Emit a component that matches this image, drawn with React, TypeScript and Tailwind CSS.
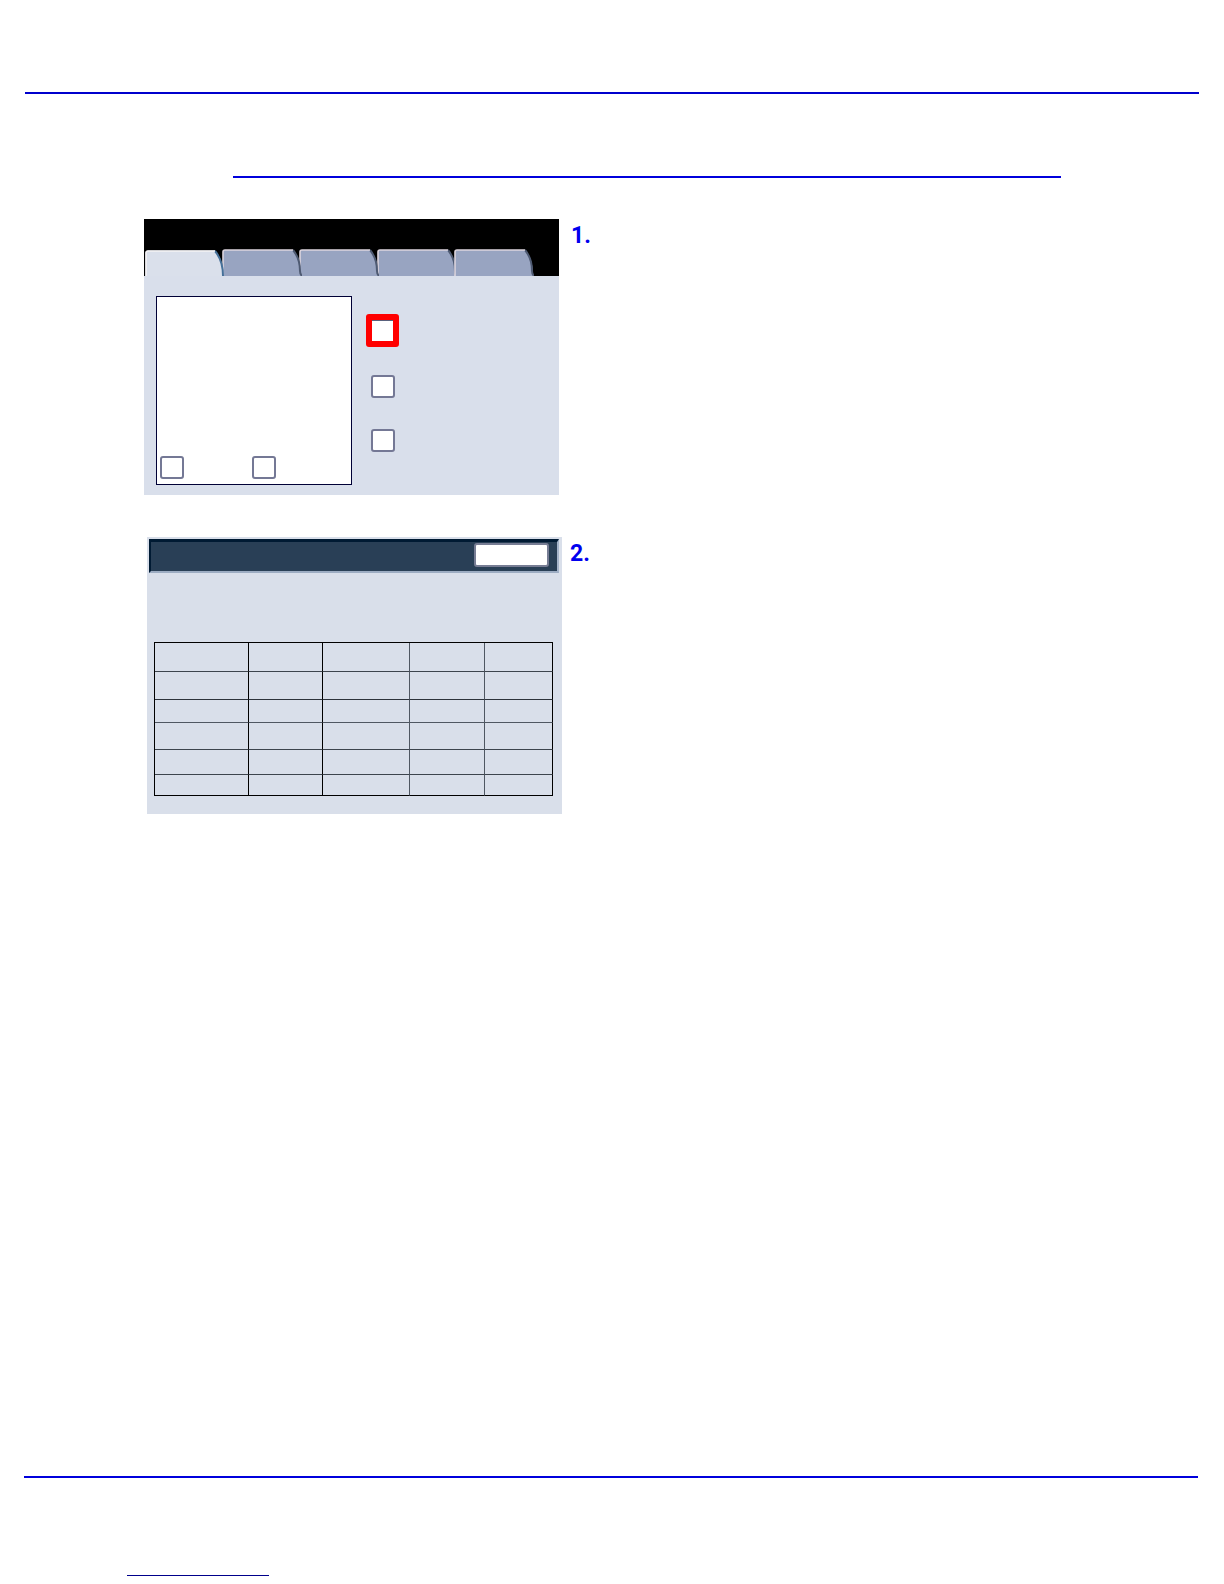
import clsx from "clsx";

const tabs = [
  { id: "Tab 1", active: true, layer: "z-40" },
  { id: "Tab 2", active: false, layer: "z-30" },
  { id: "Tab 3", active: false, layer: "z-20" },
  { id: "Tab 4", active: false, layer: "z-10" },
  { id: "Tab 5", active: false, layer: "z-20" },
];

const rows = [
  { height: "h-[29px]", line: "border-b-[#3d444d]" },
  { height: "h-[28px]", line: "border-b-[#2d333b]" },
  { height: "h-[23px]", line: "border-b-[#4f5762]" },
  { height: "h-[27px]", line: "border-b-[#3d444d]" },
  { height: "h-[25px]", line: "border-b-[#3d444d]" },
  { height: "h-[21px]", line: "border-b-black" },
];

const columns = ["border-r-black", "border-r-black", "border-r-[#4f5762]", "border-r-[#4f5762]", "border-r-black"];

interface TabProps {
  id: string;
  active: boolean;
  layer: string;
}

const Tab = ({ id, active, layer }: TabProps) => {
  return (
    <button type="button" aria-label={id} className={clsx("relative w-20", layer)}>
      <svg viewBox="0 0 80 27" className="block h-[27px] w-full" fill="none">
        <path
          d={active ? "M1.5 27V3.5Q1.5 1.5 4 1.5H71C76 7 79 15 79 27Z" : "M1 27V3Q1 1 3 1H71C76 6 79 14 79 27Z"}
          fill={active ? "#dae0eb" : "#98a4c1"}
        />
        <path
          d={active ? "M71 2C76 8 79 16 79 27" : "M71 1C76 7 78 14 78 22Q78 25 80 27"}
          stroke={active ? "#46719a" : "#4e5a72"}
          strokeWidth="2"
        />
        <path
          d={active ? "M2 27V4Q2 2 4 2H71" : "M1 27V3Q1 1 3 1H71"}
          stroke={active ? "#f5f3f5" : "#ddd5de"}
          strokeWidth="1.6"
        />
      </svg>
    </button>
  );
};

const CheckBox = ({ label, selected = false }: { label: string; selected?: boolean }) => {
  return (
    <input
      type="checkbox"
      aria-label={label}
      className={clsx(
        "block appearance-none bg-white",
        selected
          ? "size-[33px] rounded-[3px] border-[6px] border-[#ff0000] shadow-[inset_0_1px_0_#59617c]"
          : "h-[23px] w-6 rounded-[3px] border-2 border-[#747895]"
      )}
    />
  );
};

/* Services screen with tabs, preview and options */
const TabbedScreen = () => {
  return (
    <div className="w-[415px] bg-[#d9dfeb]">
      <div className="flex h-[57px] items-end bg-black">
        {/* tabs are wider than their column so that they overlap */}
        <div className="grid w-[388px] grid-cols-5">
          {tabs.map((tab) => (
            <Tab key={tab.id} {...tab} />
          ))}
        </div>
      </div>
      <div className="flex px-3 pt-5 pb-[10px]">
        <div className="flex h-[189px] w-[196px] items-end gap-[68px] border border-[#000036] bg-white px-[3px] pb-[5px]">
          <CheckBox label="Preview option 1" />
          <CheckBox label="Preview option 2" />
        </div>
        <div className="flex flex-col items-center pt-[18px] pl-[14px]">
          <CheckBox label="Option 1" selected />
          <div className="mt-7 flex flex-col gap-[31px]">
            <CheckBox label="Option 2" />
            <CheckBox label="Option 3" />
          </div>
        </div>
      </div>
    </div>
  );
};

/* Counter screen: title bar, close button and grid */
const TableScreen = () => {
  return (
    <div className="w-[415px] bg-[#d9dfea] px-0.5 pt-0.5 pb-[18px]">
      <div className="mr-px flex h-[34px] items-start justify-end border-t-[3px] border-r-2 border-b-2 border-l-2 border-t-[#001a33] border-r-[#a5b4ca] border-b-[#9cacc2] border-l-[#001a33] bg-[#293f56] pt-px pr-2">
        <button
          type="button"
          aria-label="Close"
          className="h-6 w-[75px] rounded-[3px] border-2 border-[#777d94] bg-white"
        />
      </div>
      <table className="mt-[69px] ml-[5px] w-[399px] table-fixed border-separate border-spacing-0 border-t border-l border-black">
        <colgroup>
          <col className="w-[94px]" />
          <col className="w-[74px]" />
          <col className="w-[87px]" />
          <col className="w-[75px]" />
          <col />
        </colgroup>
        <tbody>
          {rows.map((row, r) => (
            <tr key={r}>
              {columns.map((column, c) => (
                <td key={c} className={clsx("border-r border-b p-0", row.height, row.line, column)} />
              ))}
            </tr>
          ))}
        </tbody>
      </table>
    </div>
  );
};

const App = () => {
  return (
    <div className="flex min-h-screen flex-col bg-white px-6 font-[Roboto,Arial,sans-serif]">
      <header className="pt-[92px]">
        <hr className="mr-px ml-px border-t-2 border-[#0000cd]" />
        <hr className="mt-[82px] mr-[139px] ml-[209px] border-t-2 border-[#0000dc]" />
      </header>

      <main className="flex-1 pt-[41px] pl-[120px]">
        <ol className="flex flex-col gap-[42px] text-[23px] leading-7 font-bold text-[#0000ee]">
          <li className="flex gap-3">
            <TabbedScreen />
            <span className="pt-[3px]">1.</span>
          </li>
          <li className="flex gap-2 pl-[3px]">
            <TableScreen />
            <span className="pt-[3px]">2.</span>
          </li>
        </ol>
      </main>

      <footer className="pb-2">
        <hr className="mr-0.5 border-t-2 border-[#0000dc]" />
        <a href="#" aria-label="Website" className="mt-20 ml-[103px] block h-[18px] w-[142px] border-b border-[#00008b]" />
      </footer>
    </div>
  );
};

export default App;
